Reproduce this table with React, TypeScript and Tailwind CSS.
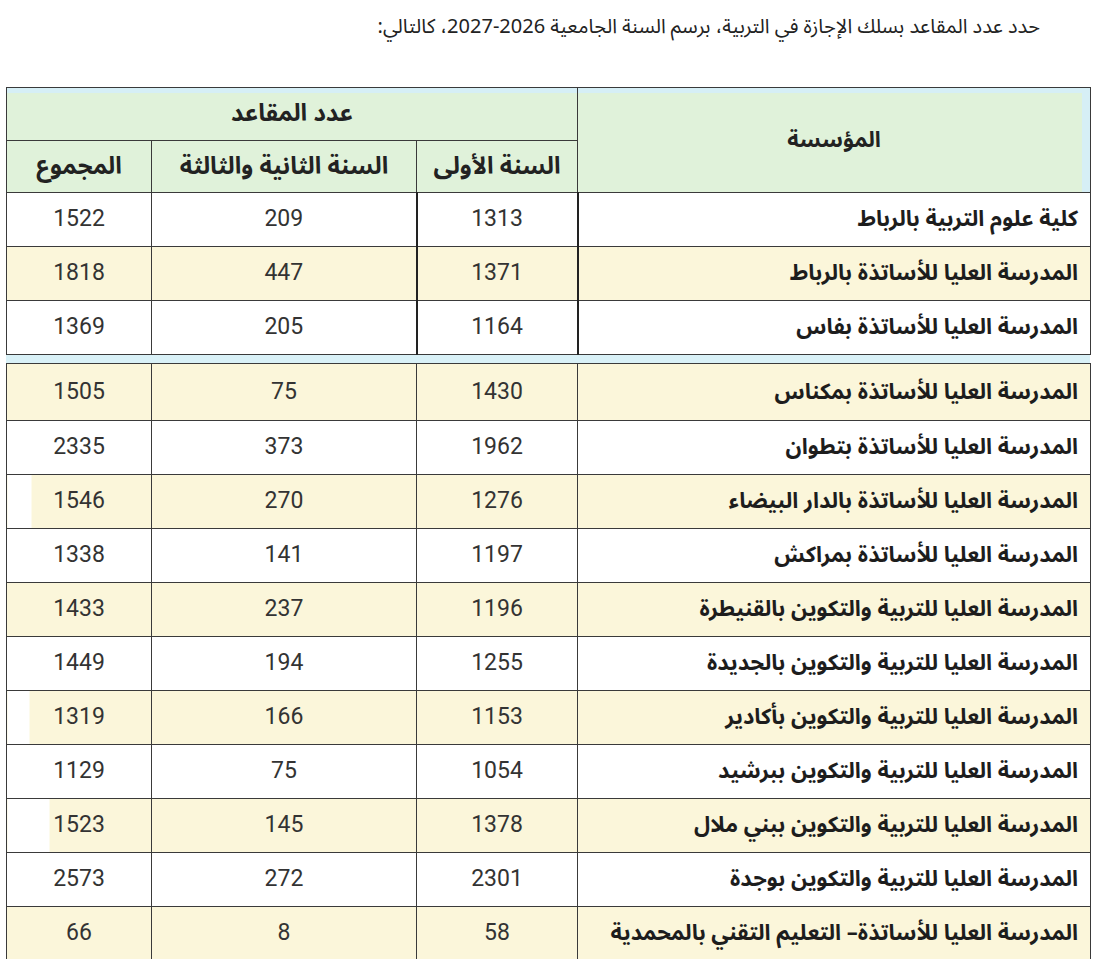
const rows: { name: string; first: string; second: string; total: string; hl?: boolean; inset?: string }[] = [
  { name: 'كلية علوم التربية بالرباط', first: '1313', second: '209', total: '1522' },
  { name: 'المدرسة العليا للأساتذة بالرباط', first: '1371', second: '447', total: '1818', hl: true },
  { name: 'المدرسة العليا للأساتذة بفاس', first: '1164', second: '205', total: '1369' },
  { name: 'المدرسة العليا للأساتذة بمكناس', first: '1430', second: '75', total: '1505', hl: true },
  { name: 'المدرسة العليا للأساتذة بتطوان', first: '1962', second: '373', total: '2335' },
  { name: 'المدرسة العليا للأساتذة بالدار البيضاء', first: '1276', second: '270', total: '1546', hl: true, inset: 'bg-[linear-gradient(to_right,white_24px,#fbf6da_24px)]' },
  { name: 'المدرسة العليا للأساتذة بمراكش', first: '1197', second: '141', total: '1338' },
  { name: 'المدرسة العليا للتربية والتكوين بالقنيطرة', first: '1196', second: '237', total: '1433', hl: true },
  { name: 'المدرسة العليا للتربية والتكوين بالجديدة', first: '1255', second: '194', total: '1449' },
  { name: 'المدرسة العليا للتربية والتكوين بأكادير', first: '1153', second: '166', total: '1319', hl: true, inset: 'bg-[linear-gradient(to_right,white_22px,#fbf6da_22px)]' },
  { name: 'المدرسة العليا للتربية والتكوين ببرشيد', first: '1054', second: '75', total: '1129' },
  { name: 'المدرسة العليا للتربية والتكوين ببني ملال', first: '1378', second: '145', total: '1523', hl: true, inset: 'bg-[linear-gradient(to_right,white_42px,#fbf6da_42px)]' },
  { name: 'المدرسة العليا للتربية والتكوين بوجدة', first: '2301', second: '272', total: '2573' },
  { name: 'المدرسة العليا للأساتذة– التعليم التقني بالمحمدية', first: '58', second: '8', total: '66', hl: true },
];

const arabic = "font-['Noto_Sans_Arabic','DejaVu_Sans',sans-serif]";
const nums = "font-['Liberation_Sans_Narrow','Roboto',sans-serif]";

function Cols() {
  return (
    <colgroup>
      <col className="w-[513px]" />
      <col className="w-[161px]" />
      <col className="w-[265px]" />
      <col className="w-[145px]" />
    </colgroup>
  );
}

function Row({ r, tall, boxed }: { r: (typeof rows)[number]; tall?: boolean; boxed?: boolean }) {
  const bg = r.hl ? 'bg-[#fbf6da]' : 'bg-white';
  const num = `border border-[#3a3a3a] text-center text-[23px] text-[#333] ${nums}`;
  return (
    <tr className={tall ? 'h-[57px]' : 'h-[54px]'}>
      <td className={`border border-[#3a3a3a] pr-3 text-right text-[22px] font-bold text-[#1d1d1d] ${arabic} ${bg}`}>{r.name}</td>
      <td className={`${num} ${bg} ${boxed ? 'border-x-2 border-x-[#222]' : ''}`}>{r.first}</td>
      <td className={`${num} ${bg}`}>{r.second}</td>
      <td className={`${num} ${r.inset ?? bg}`}>{r.total}</td>
    </tr>
  );
}

export default function App() {
  const th = `border border-[#3a3a3a] bg-[#e0f2da] text-center font-bold text-[#222] ${arabic}`;
  return (
    <div className="min-h-screen w-[1103px] bg-white overflow-hidden">
      <p dir="rtl" className={`pr-[63px] pt-[12px] h-[87px] text-[20px] text-[#222] ${arabic}`}>
        حدد عدد المقاعد بسلك الإجازة في التربية، برسم السنة الجامعية 2026-2027، كالتالي:
      </p>

      <div className="pl-[6px] w-[1090px]">
        <table dir="rtl" className="w-[1084px] table-fixed border-collapse">
          <Cols />
          <thead>
            <tr className="h-[53px]">
              <th rowSpan={2} className={`${th} text-[22px] shadow-[inset_0_5px_0_#d6eff6,inset_-8px_0_0_#d6eff6]`}>المؤسسة</th>
              <th colSpan={3} className={`${th} text-[24px] shadow-[inset_0_5px_0_#d6eff6]`}>عدد المقاعد</th>
            </tr>
            <tr className="h-[52px]">
              <th className={`${th} text-[24px]`}>السنة الأولى</th>
              <th className={`${th} text-[24px]`}>السنة الثانية والثالثة</th>
              <th className={`${th} text-[24px]`}>المجموع</th>
            </tr>
          </thead>
          <tbody>
            {rows.slice(0, 3).map((r) => (
              <Row key={r.name} r={r} boxed />
            ))}
          </tbody>
        </table>

        {/* scan seam between the two halves */}
        <div className="h-[8px] bg-[#d9f1f7]" />

        <table dir="rtl" className="w-[1084px] table-fixed border-collapse">
          <Cols />
          <tbody>
            {rows.slice(3).map((r, i) => (
              <Row key={r.name} r={r} tall={i === 0} />
            ))}
          </tbody>
        </table>
      </div>
    </div>
  );
}
